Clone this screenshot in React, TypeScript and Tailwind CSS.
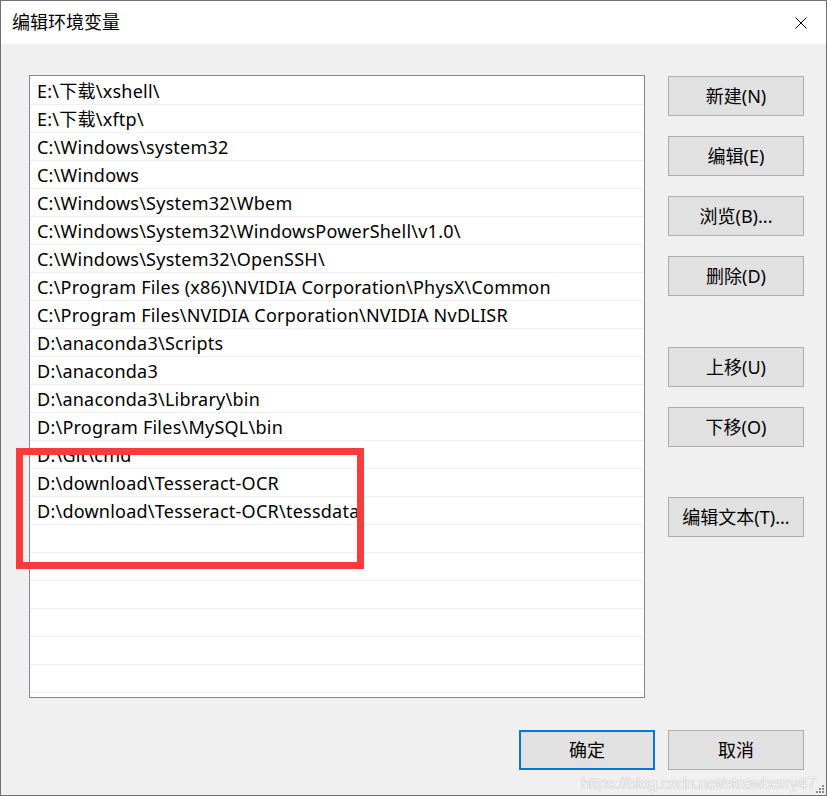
const paths = [
  'E:\\下载\\xshell\\',
  'E:\\下载\\xftp\\',
  'C:\\Windows\\system32',
  'C:\\Windows',
  'C:\\Windows\\System32\\Wbem',
  'C:\\Windows\\System32\\WindowsPowerShell\\v1.0\\',
  'C:\\Windows\\System32\\OpenSSH\\',
  'C:\\Program Files (x86)\\NVIDIA Corporation\\PhysX\\Common',
  'C:\\Program Files\\NVIDIA Corporation\\NVIDIA NvDLISR',
  'D:\\anaconda3\\Scripts',
  'D:\\anaconda3',
  'D:\\anaconda3\\Library\\bin',
  'D:\\Program Files\\MySQL\\bin',
  'D:\\Git\\cmd',
  'D:\\download\\Tesseract-OCR',
  'D:\\download\\Tesseract-OCR\\tessdata',
];

const rows = [...paths, ...Array(8).fill('')];

function Btn({ label, primary = false, className = '' }: { label: string; primary?: boolean; className?: string }) {
  return (
    <button
      className={
        'w-[136px] h-[40px] bg-[#e1e1e1] text-[18px] text-black flex items-center justify-center ' +
        (primary ? 'border-2 border-[#0078d7] ' : 'border border-[#adadad] ') +
        className
      }
    >
      {label}
    </button>
  );
}

export default function App() {
  return (
    <div
      className="relative w-[827px] h-[796px] bg-[#f0f0f0] border border-[#707070] flex flex-col overflow-hidden"
      style={{ fontFamily: '"Noto Sans", "Noto Sans CJK SC", sans-serif' }}
    >
      {/* title bar */}
      <div className="h-[43px] bg-white flex items-center justify-between pl-[11px] pr-[19px] shrink-0">
        <span className="text-[18px] text-black">编辑环境变量</span>
        <svg width="12" height="12" viewBox="0 0 12 12">
          <path d="M0.5 0.5 L11.5 11.5 M11.5 0.5 L0.5 11.5" stroke="#000" strokeWidth="1" />
        </svg>
      </div>

      <div className="flex pt-[31px] pl-[28px]">
        {/* list box */}
        <div className="w-[616px] h-[623px] bg-white border border-[#828790] overflow-hidden pt-[1px]">
          {rows.map((p, i) => (
            <div
              key={i}
              className="h-[28px] border-b border-[#f0f0f0] pl-[7px] text-[18px] leading-[28px] tracking-[0.24px] text-black whitespace-nowrap"
            >
              {p}
            </div>
          ))}
        </div>

        {/* side buttons */}
        <div className="flex flex-col ml-[23px] pt-[1px]">
          <Btn label="新建(N)" />
          <Btn label="编辑(E)" className="mt-[20px]" />
          <Btn label="浏览(B)..." className="mt-[20px]" />
          <Btn label="删除(D)" className="mt-[20px]" />
          <Btn label="上移(U)" className="mt-[51px]" />
          <Btn label="下移(O)" className="mt-[20px]" />
          <Btn label="编辑文本(T)..." className="mt-[50px]" />
        </div>
      </div>

      {/* bottom buttons */}
      <div className="flex justify-end gap-[13px] pr-[22px] mt-[32px]">
        <Btn label="确定" primary />
        <Btn label="取消" />
      </div>

      {/* red annotation box */}
      <div className="absolute left-[15px] top-[447px] w-[348px] h-[121px] border-[7px] border-[#f83b3b]" />

      {/* watermark */}
      <div className="absolute left-[580px] top-[770px] text-[17px] tracking-[-0.6px] text-[#f4f4f4] [text-shadow:0_0_1px_#9a9a9a]"
        style={{ fontFamily: '"Liberation Sans", sans-serif' }}>
        https://blog.csdn.net/strawberry47
      </div>

      {/* resize grip */}
      <svg className="absolute right-[2px] bottom-[2px]" width="8" height="8" viewBox="0 0 8 8">
        <rect x="6" y="0" width="2" height="2" fill="#8a8a8a" />
        <rect x="3" y="3" width="2" height="2" fill="#8a8a8a" />
        <rect x="6" y="3" width="2" height="2" fill="#8a8a8a" />
        <rect x="0" y="6" width="2" height="2" fill="#8a8a8a" />
        <rect x="3" y="6" width="2" height="2" fill="#8a8a8a" />
        <rect x="6" y="6" width="2" height="2" fill="#8a8a8a" />
      </svg>
    </div>
  );
}
